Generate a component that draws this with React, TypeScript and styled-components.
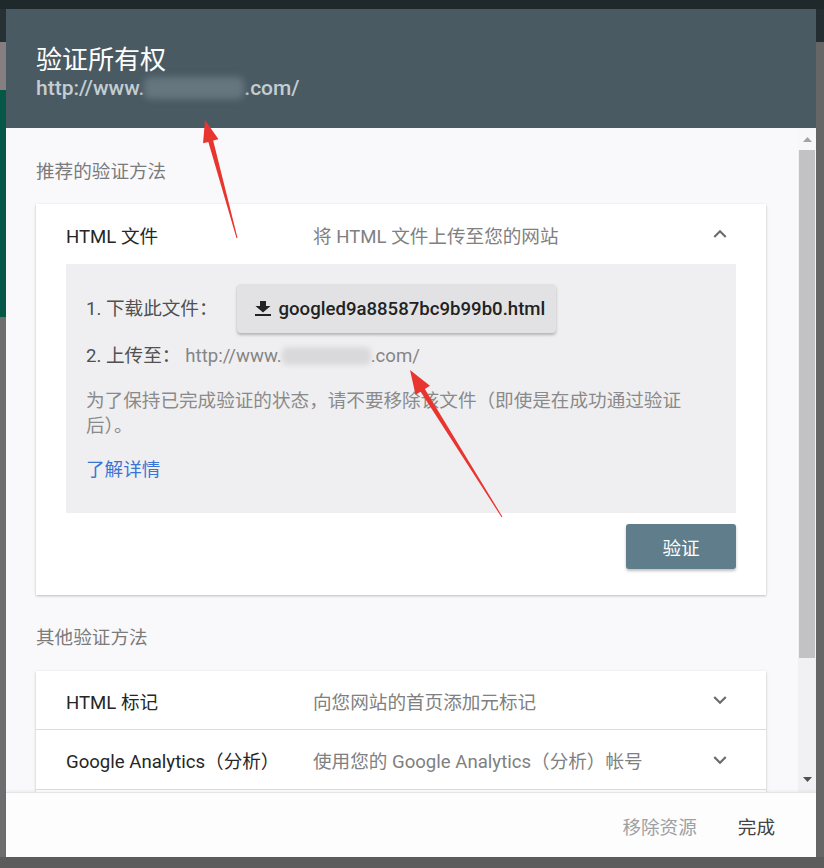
import React from "react";
import styled, { createGlobalStyle } from "styled-components";

const GlobalStyle = createGlobalStyle`
  html, body { margin: 0; padding: 0; }
  body {
    background: #5d5d5d;
    font-family: Roboto, "Noto Sans CJK SC", sans-serif;
    -webkit-font-smoothing: antialiased;
  }
`;

const Page = styled.div`
  position: relative;
  width: 824px;
  height: 868px;
  display: flex;
  flex-direction: column;
  overflow: hidden;
  background: #5d5d5d;
`;

const TopBar = styled.div`
  height: 9px;
  flex-shrink: 0;
  background: #1f292c;
`;

const BottomBar = styled.div`
  flex: 1;
  background: #5c5c5c;
`;

const Middle = styled.div`
  height: 848px;
  display: flex;
  flex-shrink: 0;
`;

const Edge = styled.div<{ $w: number }>`
  width: ${(p) => p.$w}px;
  flex-shrink: 0;
  display: flex;
  flex-direction: column;
`;

const EdgeSeg = styled.div<{ $h?: number; $c: string }>`
  ${(p) => (p.$h ? `height: ${p.$h}px; flex-shrink: 0;` : "flex: 1;")}
  background: ${(p) => p.$c};
`;

const Dialog = styled.div`
  width: 810px;
  flex-shrink: 0;
  display: flex;
  flex-direction: column;
  background: #f9f9fb;
`;

const Header = styled.header`
  height: 119px;
  flex-shrink: 0;
  box-sizing: border-box;
  padding: 36px 30px 0;
  background: #4a5a63;
`;

const Title = styled.h1`
  margin: 0;
  font-size: 26px;
  line-height: 30px;
  font-weight: 400;
  color: #ffffff;
`;

const HeaderUrl = styled.div`
  font-size: 21px;
  line-height: 26px;
  font-weight: 500;
  color: #c3cdd2;
  display: flex;
  align-items: center;
`;

const Blur = styled.span<{ $w: number; $h: number; $c: string; $r: number }>`
  display: inline-block;
  width: ${(p) => p.$w}px;
  height: ${(p) => p.$h}px;
  background: ${(p) => p.$c};
  filter: blur(${(p) => p.$r}px);
  border-radius: 6px;
`;

const Main = styled.div`
  flex: 1;
  display: flex;
  min-height: 0;
`;

const Content = styled.div`
  flex: 1;
  overflow: hidden;
  box-sizing: border-box;
  padding: 31px 32px 0 30px;
`;

const SectionHeading = styled.div<{ $top: number }>`
  margin-top: ${(p) => p.$top}px;
  font-size: 18.6px;
  line-height: 26px;
  color: #7b7b7b;
`;

const Card = styled.div<{ $top: number }>`
  margin-top: ${(p) => p.$top}px;
  background: #ffffff;
  box-shadow: 0 1px 2px rgba(0, 0, 0, 0.18), 0 1px 4px rgba(0, 0, 0, 0.08);
`;

const CardRow = styled.div<{ $h: number; $divider?: boolean }>`
  height: ${(p) => p.$h}px;
  display: flex;
  align-items: center;
  padding: 0 33px 0 30px;
  border-bottom: ${(p) => (p.$divider ? "1px solid #dcdcdc" : "none")};
  font-size: 18.6px;
`;

const RowTitle = styled.div`
  width: 247px;
  flex-shrink: 0;
  color: #262626;
  white-space: nowrap;
`;

const RowDesc = styled.div`
  flex: 1;
  color: #808080;
  white-space: nowrap;
`;

const Chevron = styled.svg`
  width: 26px;
  height: 26px;
  fill: #6b6b6b;
  flex-shrink: 0;
`;

const Panel = styled.div`
  margin: 0 30px;
  padding: 20px 20px 30px;
  background: #efeff1;
  font-size: 18.6px;
  color: #555555;
`;

const StepRow = styled.div<{ $gap: number; $top?: number }>`
  display: flex;
  align-items: center;
  gap: ${(p) => p.$gap}px;
  margin-top: ${(p) => p.$top ?? 0}px;
  line-height: 26px;
  white-space: nowrap;
`;

const StepLabel = styled.span`
  color: #505050;
`;

const StepUrl = styled.span`
  display: inline-flex;
  align-items: center;
  color: #858585;
`;

const DownloadButton = styled.button`
  height: 49px;
  display: inline-flex;
  align-items: center;
  gap: 7px;
  padding: 0 11px 0 17px;
  border: none;
  border-radius: 4px;
  background: #e2e2e4;
  box-shadow: 0 2px 3px rgba(0, 0, 0, 0.25);
  font-family: Roboto, "Noto Sans CJK SC", sans-serif;
  font-size: 18.6px;
  font-weight: 500;
  color: #222222;
`;

const Note = styled.p`
  margin: 20px 0 0;
  max-width: 605px;
  line-height: 25px;
  color: #8a8a8a;
`;

const LearnMore = styled.a`
  display: block;
  margin-top: 19px;
  line-height: 25px;
  color: #3c74d4;
  text-decoration: none;
`;

const Actions = styled.div`
  display: flex;
  justify-content: flex-end;
  padding: 11px 30px 26px;
`;

const VerifyButton = styled.button`
  width: 110px;
  height: 45px;
  border: none;
  border-radius: 3px;
  background: #607d8b;
  color: #ffffff;
  font-family: Roboto, "Noto Sans CJK SC", sans-serif;
  font-size: 18.6px;
  box-shadow: 0 2px 3px rgba(0, 0, 0, 0.25);
`;

const Scrollbar = styled.div`
  width: 18px;
  flex-shrink: 0;
  display: flex;
  flex-direction: column;
  background: #f1f1f3;
`;

const ScrollArrow = styled.div<{ $h: number; $bg: string }>`
  height: ${(p) => p.$h}px;
  flex-shrink: 0;
  display: flex;
  align-items: center;
  justify-content: center;
  background: ${(p) => p.$bg};
`;

const ScrollThumb = styled.div`
  height: 508px;
  flex-shrink: 0;
  margin: 0 1px;
  background: #c2c2c4;
`;

const ScrollTrack = styled.div`
  flex: 1;
`;

const Footer = styled.footer`
  height: 65px;
  flex-shrink: 0;
  box-sizing: border-box;
  display: flex;
  align-items: center;
  justify-content: flex-end;
  gap: 25px;
  padding: 0 33px 0 0;
  background: #fdfdfe;
  border-top: 1px solid #e4e4e6;
  box-shadow: 0 -1px 3px rgba(0, 0, 0, 0.06);
  position: relative;
`;

const FooterButton = styled.button<{ $muted?: boolean }>`
  padding: 8px;
  border: none;
  background: transparent;
  font-family: Roboto, "Noto Sans CJK SC", sans-serif;
  font-size: 18.6px;
  color: ${(p) => (p.$muted ? "#a0a0a0" : "#424242")};
`;

const Overlay = styled.svg`
  position: absolute;
  left: 0;
  top: 0;
  width: 824px;
  height: 868px;
  pointer-events: none;
`;

const ExpandLess = () => (
  <Chevron viewBox="0 0 24 24">
    <path d="M12 8l-6 6 1.41 1.41L12 10.83l4.59 4.58L18 14z" />
  </Chevron>
);

const ExpandMore = () => (
  <Chevron viewBox="0 0 24 24">
    <path d="M16.59 8.59L12 13.17 7.41 8.59 6 10l6 6 6-6z" />
  </Chevron>
);

const DownloadIcon = () => (
  <svg width="18" height="15" viewBox="0 0 18 15" fill="#222">
    <path d="M6 0h6v5h4.5L9 11.5 1.5 5H6z" />
    <path d="M1 13h16v2H1z" />
  </svg>
);

export default function App() {
  return (
    <>
      <GlobalStyle />
      <Page>
        <TopBar />
        <Middle>
          <Edge $w={6}>
            <EdgeSeg $h={33} $c="#273135" />
            <EdgeSeg $h={48} $c="#867e81" />
            <EdgeSeg $h={227} $c="#055747" />
            <EdgeSeg $c="#6e6e6e" />
          </Edge>
          <Dialog>
            <Header>
              <Title>验证所有权</Title>
              <HeaderUrl>
                http://www.
                <Blur $w={100} $h={22} $c="#66767e" $r={3.5} />
                .com/
              </HeaderUrl>
            </Header>
            <Main>
              <Content>
                <SectionHeading $top={0}>推荐的验证方法</SectionHeading>
                <Card $top={19}>
                  <CardRow $h={60}>
                    <RowTitle>HTML 文件</RowTitle>
                    <RowDesc>将 HTML 文件上传至您的网站</RowDesc>
                    <ExpandLess />
                  </CardRow>
                  <Panel>
                    <StepRow $gap={19}>
                      <StepLabel>1. 下载此文件：</StepLabel>
                      <DownloadButton>
                        <DownloadIcon />
                        googled9a88587bc9b99b0.html
                      </DownloadButton>
                    </StepRow>
                    <StepRow $gap={5} $top={10}>
                      <StepLabel>2. 上传至：</StepLabel>
                      <StepUrl>
                        http://www.
                        <Blur $w={89} $h={18} $c="#d9d9db" $r={2.5} />
                        .com/
                      </StepUrl>
                    </StepRow>
                    <Note>
                      为了保持已完成验证的状态，请不要移除该文件（即使是在成功通过验证后）。
                    </Note>
                    <LearnMore href="#">了解详情</LearnMore>
                  </Panel>
                  <Actions>
                    <VerifyButton>验证</VerifyButton>
                  </Actions>
                </Card>
                <SectionHeading $top={30}>其他验证方法</SectionHeading>
                <Card $top={20}>
                  <CardRow $h={58} $divider>
                    <RowTitle>HTML 标记</RowTitle>
                    <RowDesc>向您网站的首页添加元标记</RowDesc>
                    <ExpandMore />
                  </CardRow>
                  <CardRow $h={59} $divider>
                    <RowTitle>Google Analytics（分析）</RowTitle>
                    <RowDesc>使用您的 Google Analytics（分析）帐号</RowDesc>
                    <ExpandMore />
                  </CardRow>
                  <CardRow $h={58} />
                </Card>
              </Content>
              <Scrollbar>
                <ScrollArrow $h={22} $bg="#f7f7f9">
                  <svg width="9" height="5" viewBox="0 0 9 5">
                    <path d="M4.5 0L9 5H0z" fill="#a3a3a3" />
                  </svg>
                </ScrollArrow>
                <ScrollThumb />
                <ScrollTrack />
                <ScrollArrow $h={26} $bg="#f1f1f3">
                  <svg width="9" height="5" viewBox="0 0 9 5">
                    <path d="M0 0h9L4.5 5z" fill="#505050" />
                  </svg>
                </ScrollArrow>
              </Scrollbar>
            </Main>
            <Footer>
              <FooterButton $muted>移除资源</FooterButton>
              <FooterButton>完成</FooterButton>
            </Footer>
          </Dialog>
          <Edge $w={8}>
            <EdgeSeg $h={33} $c="#242d31" />
            <EdgeSeg $c="#666666" />
          </Edge>
        </Middle>
        <BottomBar />
        <Overlay viewBox="0 0 824 868">
          <polygon
            fill="#e8352f"
            points="237.48,237.87 213.17,140.58 218.48,139.14 205,120 203.04,143.32 208.35,141.88 236.52,238.13"
          />
          <polygon
            fill="#e8352f"
            points="502.42,516.73 424.85,389.02 429.94,385.84 410,370 415.52,394.86 420.61,391.68 501.58,517.27"
          />
        </Overlay>
      </Page>
    </>
  );
}
